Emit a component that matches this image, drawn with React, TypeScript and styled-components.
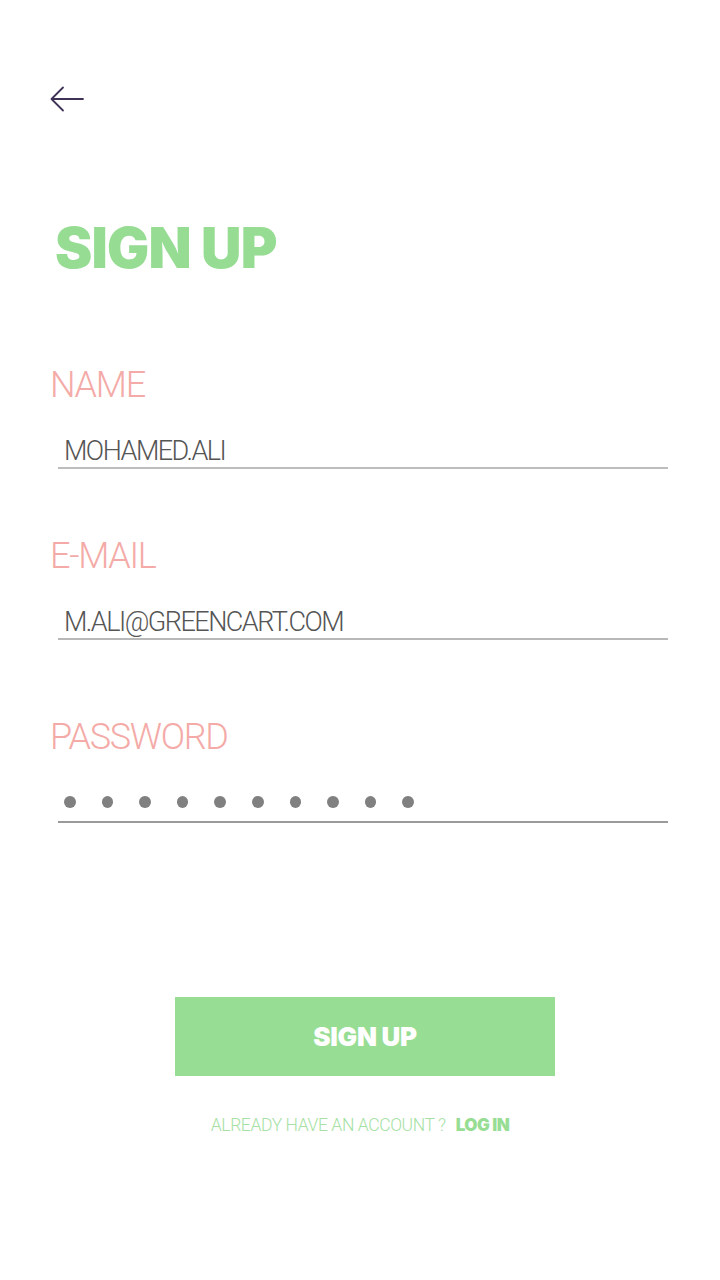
import React from "react";
import styled, { createGlobalStyle } from "styled-components";

const GlobalStyle = createGlobalStyle`
  html, body { margin: 0; padding: 0; background: #ffffff; }
  body { font-family: Roboto, "Liberation Sans", sans-serif; }
  * { box-sizing: border-box; }
`;

const Page = styled.div`
  width: 720px;
  height: 1280px;
  background: #ffffff;
  display: flex;
  flex-direction: column;
  padding: 86px 0 0 50px;
  overflow: hidden;
`;

const BackButton = styled.button`
  width: 34px;
  height: 26px;
  padding: 0;
  margin: 0;
  border: none;
  background: transparent;
  display: flex;
  cursor: pointer;
`;

const Title = styled.h1`
  margin: 108px 0 0 5px;
  font-family: Inter, Roboto, sans-serif;
  font-weight: 900;
  font-size: 56px;
  line-height: 57px;
  color: #96dc92;
  letter-spacing: -0.8px;
`;

const Form = styled.form`
  display: flex;
  flex-direction: column;
`;

const Label = styled.label<{ $top: number }>`
  margin-top: ${(p) => p.$top}px;
  font-family: Roboto, sans-serif;
  font-weight: 300;
  font-size: 36px;
  line-height: 1;
  letter-spacing: -1.3px;
  color: #f4aba8;
`;

const Field = styled.div<{ $gap: number; $line: string; $pad: number }>`
  margin: ${(p) => p.$gap}px 0 0 8px;
  width: 610px;
  padding: 0 0 ${(p) => p.$pad}px 6px;
  border-bottom: 2px solid ${(p) => p.$line};
`;

const Value = styled.div`
  font-family: Roboto, sans-serif;
  font-weight: 300;
  font-size: 27px;
  line-height: 28px;
  letter-spacing: -1.5px;
  color: #555555;
`;

const Dots = styled.div`
  display: flex;
  gap: 26px;
  height: 12px;
`;

const Dot = styled.span`
  width: 11.6px;
  height: 12px;
  border-radius: 50%;
  background: #808080;
`;

const SubmitButton = styled.button`
  margin: 0 0 0 125px;
  width: 380px;
  height: 79px;
  border: none;
  background: #98dd94;
  color: #ffffff;
  font-family: Inter, Roboto, sans-serif;
  font-weight: 900;
  font-size: 26px;
  letter-spacing: -0.3px;
  display: flex;
  align-items: center;
  justify-content: center;
  padding: 0;
`;

const Footer = styled.div`
  margin: 41px 0 0 -50px;
  width: 720px;
  display: flex;
  justify-content: center;
  align-items: baseline;
  gap: 10px;
  font-size: 17.5px;
  line-height: 1;
`;

const FooterText = styled.span`
  font-family: Roboto, sans-serif;
  font-weight: 300;
  letter-spacing: -0.4px;
  color: #a6e1a3;
`;

const FooterLink = styled.a`
  font-family: Inter, Roboto, sans-serif;
  font-weight: 900;
  font-size: 17px;
  letter-spacing: -0.5px;
  color: #98dd94;
  text-decoration: none;
`;

const Spacer = styled.div`
  height: 174px;
`;

export default function App() {
  return (
    <>
      <GlobalStyle />
      <Page>
        <BackButton aria-label="Back">
          <svg width="34" height="26" viewBox="0 0 34 26" fill="none">
            <path
              d="M33 13H2M13 1.5L1.5 13L13 24.5"
              stroke="#403257"
              strokeWidth="1.8"
              strokeLinecap="round"
              strokeLinejoin="round"
            />
          </svg>
        </BackButton>
        <Title>SIGN UP</Title>
        <Form>
          <Label $top={90}>NAME</Label>
          <Field $gap={34} $line="#bdbdbd" $pad={2}>
            <Value>MOHAMED.ALI</Value>
          </Field>
          <Label $top={69}>E-MAIL</Label>
          <Field $gap={34} $line="#b8b8b8" $pad={2}>
            <Value>M.ALI@GREENCART.COM</Value>
          </Field>
          <Label $top={79}>PASSWORD</Label>
          <Field $gap={41} $line="#9a9a9a" $pad={13}>
            <Dots>
              {Array.from({ length: 10 }).map((_, i) => (
                <Dot key={i} />
              ))}
            </Dots>
          </Field>
        </Form>
        <Spacer />
        <SubmitButton type="button">SIGN UP</SubmitButton>
        <Footer>
          <FooterText>ALREADY HAVE AN ACCOUNT ?</FooterText>
          <FooterLink href="#">LOG IN</FooterLink>
        </Footer>
      </Page>
    </>
  );
}
